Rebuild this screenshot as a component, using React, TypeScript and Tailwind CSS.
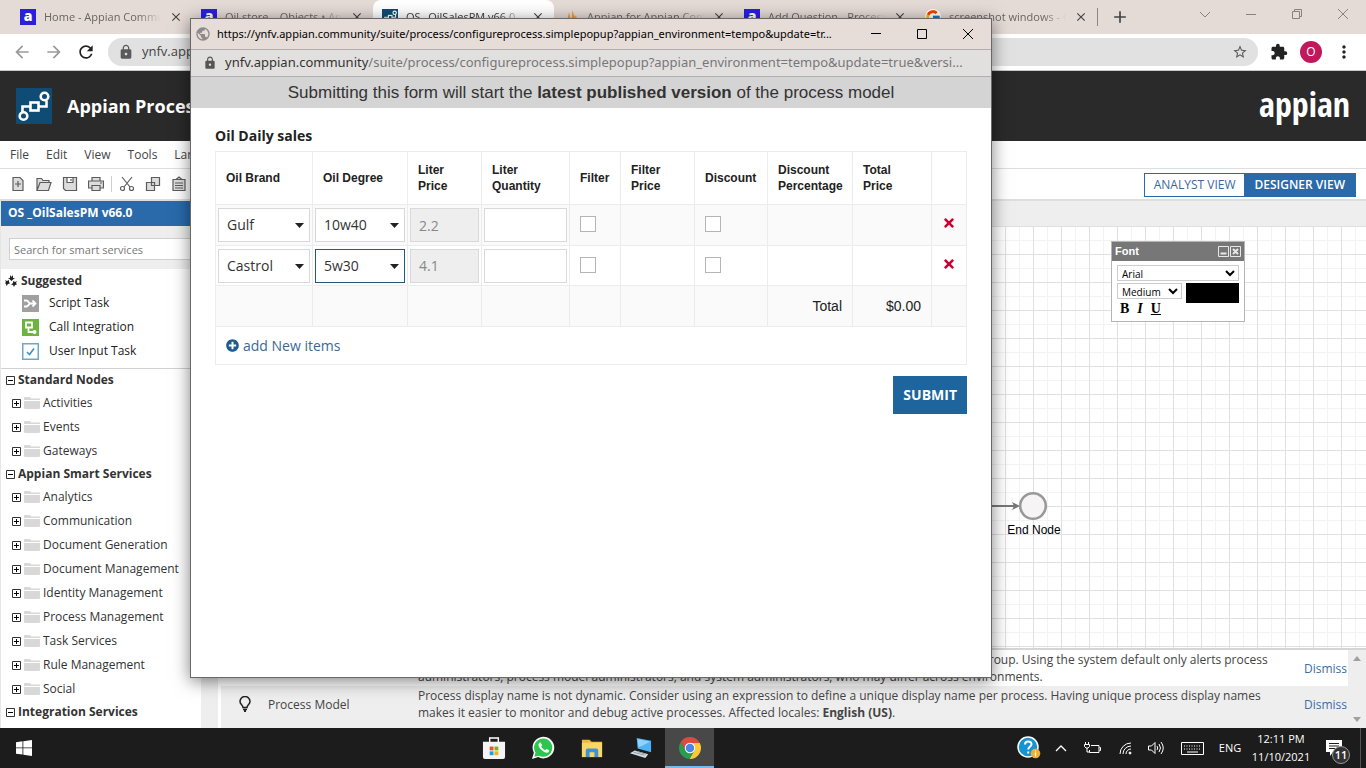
import type { ReactNode } from 'react';
import { MdArrowBack, MdArrowForward, MdClose, MdExtension, MdLock, MdMoreVert, MdPublic, MdRefresh, MdStarBorder, MdAdd } from 'react-icons/md';
import { FaPlusCircle, FaTimes } from 'react-icons/fa';
import { FcGoogle } from 'react-icons/fc';

const BROWSER_TABS = [
  { title: 'Home - Appian Community', icon: 'appian' },
  { title: 'Oil store – Objects • Appian', icon: 'appian' },
  { title: 'OS _OilSalesPM v66.0', icon: 'process', active: true },
  { title: 'Appian for Appian Community', icon: 'flame' },
  { title: 'Add Question - Process', icon: 'appian' },
  { title: 'screenshot windows - Google', icon: 'google' },
];

const NODE_GROUPS = [
  { name: 'Standard Nodes', items: ['Activities', 'Events', 'Gateways'] },
  {
    name: 'Appian Smart Services',
    items: [
      'Analytics',
      'Communication',
      'Document Generation',
      'Document Management',
      'Identity Management',
      'Process Management',
      'Task Services',
      'Rule Management',
      'Social',
    ],
  },
  { name: 'Integration Services', items: ['Connectors'] },
];

const SALES = [
  { brand: 'Gulf', degree: '10w40', price: '2.2' },
  { brand: 'Castrol', degree: '5w30', price: '4.1', focused: true },
];

const ProcessMark = ({ className }: { className: string }) => (
  <svg viewBox="0 0 36 36" className={className}>
    <rect width="36" height="36" fill="#0f4c75" />
    <g fill="none" stroke="#fff" strokeWidth="2.6">
      <circle cx="28.5" cy="8.5" r="3.8" />
      <circle cx="7.5" cy="28" r="3.8" />
      <rect x="14.500" y="14.500" width="8" height="8" />
      <path d="M6.500 24v-5.500h8M22.500 18.500h8v-6" />
    </g>
  </svg>
);

function Favicon({ icon }: { icon: string }) {
  if (icon === 'process') return <ProcessMark className="size-4 shrink-0" />;
  if (icon === 'google') return <FcGoogle className="size-4 shrink-0 rounded-full bg-white" />;
  if (icon === 'flame') {
    return (
      <svg viewBox="0 0 16 16" className="size-4 shrink-0">
        <path d="M1 15 3 9l1 3 2-9 2 8 1-2V1l3 7 1-2 2 9z" fill="#f0a04b" />
        <path d="M5 15 6 8l2 5 2-6 2 8z" fill="#e08020" />
      </svg>
    );
  }
  return (
    <span className="flex size-4 shrink-0 items-center justify-center bg-[#2a20dc] pb-0.5 text-sm leading-none font-extrabold text-white">
      a
    </span>
  );
}

function BrowserTabs() {
  return (
    <div className="flex h-[34px] shrink-0 bg-[#e4dad6] pl-[11px]">
      {BROWSER_TABS.map((tab) => (
        <div
          key={tab.title}
          className={`flex w-[181px] shrink-0 items-center gap-2 px-[9px] text-[11px] ${
            tab.active ? 'rounded-t-lg bg-white text-[#3c3c3c]' : 'text-[#6a6462]'
          }`}
        >
          <Favicon icon={tab.icon} />
          <span className="flex-1 overflow-hidden whitespace-nowrap [mask-image:linear-gradient(to_right,black_80%,transparent)]">
            {tab.title}
          </span>
          <button aria-label={`Close ${tab.title}`} className="text-[#444]">
            <MdClose className="size-3.5" />
          </button>
        </div>
      ))}
      <div className="my-2 w-px bg-[#8d8583]" />
      <button aria-label="New tab" className="px-3 text-[#444]">
        <MdAdd className="size-5" />
      </button>
      <div className="ml-auto flex text-[#8a817e]">
        {[
          { label: 'Search tabs', d: 'M1 4l5 5 5-5' },
          { label: 'Minimize', d: 'M1 6.500h10' },
          { label: 'Restore', d: 'M1.500 3.500h7v7h-7zM3.500 3.500v-2h7v7h-2' },
          { label: 'Close window', d: 'M1 1l10 10M11 1L1 11' },
        ].map((control) => (
          <button key={control.label} aria-label={control.label} className="flex w-[46px] items-start justify-center pt-2">
            <svg viewBox="0 0 12 12" className="size-3" fill="none" stroke="currentColor">
              <path d={control.d} />
            </svg>
          </button>
        ))}
      </div>
    </div>
  );
}

function AddressBar() {
  return (
    <div className="flex h-[37px] shrink-0 items-center border-b border-[#c9c9c9] bg-white px-3">
      <button aria-label="Back" className="w-8 text-[#9a9a9a]">
        <MdArrowBack className="size-5" />
      </button>
      <button aria-label="Forward" className="w-8 text-[#9a9a9a]">
        <MdArrowForward className="size-5" />
      </button>
      <button aria-label="Reload" className="w-8 text-[#222]">
        <MdRefresh className="size-5" />
      </button>
      <div className="flex h-7 flex-1 items-center gap-2 rounded-full bg-[#e1e1e1] px-2.5 text-[#5a5a5a]">
        <MdLock className="size-4" />
        <input
          aria-label="Address"
          defaultValue="ynfv.appian.community/suite/process/designer"
          className="flex-1 bg-transparent text-[13px] text-[#444] outline-none"
        />
        <MdStarBorder className="size-4" />
      </div>
      <button aria-label="Extensions" className="ml-3 text-[#222]">
        <MdExtension className="size-[18px]" />
      </button>
      <button className="ml-3 size-[22px] rounded-full bg-[#c2185b] text-xs text-white">O</button>
      <button aria-label="Menu" className="ml-3 text-[#222]">
        <MdMoreVert className="size-5" />
      </button>
    </div>
  );
}

const TOOL_ICONS: { label: string; art: ReactNode }[] = [
  { label: 'New', art: <path d="M3 1.500h7l3 3v10H3zM8 5v6M5 8h6" /> },
  { label: 'Open', art: <path d="M1 14.500v-12h4.500l1.500 2h6v2M1 14.500l3-8h11l-2.500 8z" /> },
  { label: 'Save', art: <path d="M1.500 1.500h13v13h-11l-2-2zM5 1.500v5h6v-5M9 3v2" /> },
  { label: 'Print', art: <path d="M4 5V1.500h8V5M4 12H.5V5h15v7H12M4 9.500h8v5H4zM12 7h2" /> },
  {
    label: 'Cut',
    art: (
      <g fill="none">
        <path d="M3 1l8 10M13 1L5 11" />
        <circle cx="3.500" cy="12.500" r="2" />
        <circle cx="12.500" cy="12.500" r="2" />
      </g>
    ),
  },
  { label: 'Copy', art: <path d="M6.500 1.500h8v8h-8zM1.500 6.500h8v8h-8z" /> },
  { label: 'Paste', art: <path d="M2 3.500h12v11H2zM5 3.500L8 1l3 2.500M4 7h8M4 9.500h8M4 12h8" /> },
];

function Toolbar() {
  return (
    <div className="flex h-8 shrink-0 items-center border-b-2 border-[#dedede] pr-2.5 pl-[5px]">
      {TOOL_ICONS.map((tool) => (
        <button
          key={tool.label}
          aria-label={tool.label}
          className={`flex w-[26px] justify-center ${tool.label === 'Cut' ? 'ml-0.5 box-content border-l border-[#d0d0d0] pl-0.5' : ''}`}
        >
          <svg viewBox="0 0 16 16" className="size-4" fill="#dcdcdc" stroke="#5c5c5c" strokeWidth="1.2">
            {tool.art}
          </svg>
        </button>
      ))}
      <div className="mt-0.5 ml-auto flex h-6 border border-[#2a6aab] text-xs">
        <button className="px-[9px] text-[#3a6a9c]">ANALYST VIEW</button>
        <button className="bg-[#2a6aab] px-2.5 font-semibold text-white">DESIGNER VIEW</button>
      </div>
    </div>
  );
}

const ToggleBox = ({ open }: { open: boolean }) => (
  <svg viewBox="0 0 9 9" className="size-[9px] shrink-0" fill="#fff" stroke="#333">
    <path d="M.5.500h8v8h-8z" />
    <path d={open ? 'M2 4.500h5' : 'M2 4.500h5M4.500 2v5'} stroke="#000" />
  </svg>
);

const Folder = () => (
  <svg viewBox="0 0 16 12" className="w-4 shrink-0">
    <path d="M0 1a1 1 0 0 1 1-1h5l1 1.500h9V3H0zM0 4h16v7a1 1 0 0 1-1 1H1a1 1 0 0 1-1-1z" fill="#d8d8d8" />
  </svg>
);

const SUGGESTED: { name: string; art: ReactNode }[] = [
  {
    name: 'Script Task',
    art: (
      <>
        <rect width="17" height="17" fill="#a0a0a0" />
        <path d="M2 5.500h2.500c2 0 2 3 4 3H13M2 11.500h2.500c2 0 2-3 4-3M10.500 5.500l3 3-3 3" fill="none" stroke="#fff" strokeWidth="1.8" />
      </>
    ),
  },
  {
    name: 'Call Integration',
    art: (
      <>
        <rect width="17" height="17" fill="#6cb33f" />
        <path d="M4 3.500h6v5H4zM6.500 8.500v4.500h5" fill="none" stroke="#fff" strokeWidth="1.800" />
        <circle cx="12.500" cy="13" r="2" fill="#fff" />
      </>
    ),
  },
  {
    name: 'User Input Task',
    art: (
      <>
        <rect x=".75" y=".75" width="15.500" height="15.500" fill="#fff" stroke="#6fa8c7" strokeWidth="1.500" />
        <path d="M5 9l2.500 2.500L12 5.500" fill="none" stroke="#3f8fc0" strokeWidth="1.600" />
      </>
    ),
  },
];

function Sidebar() {
  return (
    <aside className="w-[201px] shrink-0 overflow-hidden border-l border-[#e6e6e6] bg-white text-xs text-[#333]">
      <h2 className="h-[25px] bg-[#2a6aab] pl-[7px] leading-6 font-bold text-white">OS _OilSalesPM v66.0</h2>
      <div className="bg-[#eeeeee] px-2 pt-3 pb-[9px]">
        <input
          aria-label="Search for smart services"
          placeholder="Search for smart services"
          className="h-[22px] w-full border border-[#d0d0d0] bg-white px-1 text-[11px] placeholder:text-[#777]"
        />
      </div>
      <div className="border-b border-[#d0d0d0] pb-[5px]">
        <h3 className="flex h-[22px] items-center gap-1 pt-0.5 pl-1 font-bold">
          <svg viewBox="0 0 12 12" className="size-3" fill="#222">
            <path d="M5 0l1.500 2L8 0v3h2L8 4.500 6.500 6 5 4.500 3 3h2zM0 5l2 1 2-1v2l1 1.500-2 .5-1.500 2L1 9 0 8l1-1zM8 6l2 1 2-1-1 2 1 1.500-2 .5L9 12 8 10 6 9.500 8 8z" />
          </svg>
          Suggested
        </h3>
        {SUGGESTED.map((task) => (
          <a key={task.name} href="#" className="flex h-6 items-center gap-2.5 pl-[21px] text-[#222]">
            <svg viewBox="0 0 17 17" className="size-[17px]">
              {task.art}
            </svg>
            {task.name}
          </a>
        ))}
      </div>
      {NODE_GROUPS.map((group) => (
        <div key={group.name}>
          <h3 className="flex h-[22px] items-center gap-[3px] pl-[5px] font-bold">
            <ToggleBox open />
            {group.name}
          </h3>
          {group.items.map((item) => (
            <a key={item} href="#" className="flex h-6 items-center gap-[3px] pl-[11px]">
              <ToggleBox open={false} />
              <Folder />
              {item}
            </a>
          ))}
        </div>
      ))}
    </aside>
  );
}

function FontPanel() {
  return (
    <div className="absolute top-[15px] left-[890px] w-[134px] border border-[#b5b5b5] bg-white text-[10px]">
      <div className="flex h-[19px] items-center bg-[#777] px-[3px] text-[11px] font-bold text-white">
        Font
        <svg viewBox="0 0 23 11" className="ml-auto h-[11px] w-[23px]" fill="none" stroke="#e8e8e8">
          <path d="M.5.500h10v10H.5zM12.500.500h10v10h-10z" />
          <path d="M2.500 7.500h6M15 3l5 5M20 3l-5 5" strokeWidth="2" />
        </svg>
      </div>
      <div className="flex flex-wrap gap-x-1 gap-y-0.5 px-[5px] pt-1 pb-1 font-['Open_Sans',sans-serif]">
        <select aria-label="Font family" className="h-4 w-full border border-[#ccc] bg-white text-black">
          <option>Arial</option>
        </select>
        <select aria-label="Font size" className="h-4 w-[65px] border border-[#ccc] bg-white text-black">
          <option>Medium</option>
        </select>
        <button aria-label="Font colour" className="-mb-1 h-5 flex-1 bg-black" />
        <div className="flex w-full gap-2 pl-[3px] font-['Liberation_Serif',serif] text-sm leading-4 font-bold text-black">
          <button>B</button>
          <button className="italic">I</button>
          <button className="underline">U</button>
        </div>
      </div>
    </div>
  );
}

function Canvas() {
  return (
    <div className="relative flex-1 overflow-hidden bg-white font-['Liberation_Sans',sans-serif] text-xs [background-image:linear-gradient(#e0e0e0_1px,transparent_1px),linear-gradient(90deg,#e0e0e0_1px,transparent_1px),linear-gradient(#f3f3f3_1px,transparent_1px),linear-gradient(90deg,#f3f3f3_1px,transparent_1px)] [background-size:28px_28px,28px_28px,14px_14px,14px_14px]">
      <div className="absolute top-[265px] left-[726px] flex w-[174px] flex-col items-center text-black">
        <svg viewBox="0 0 174 30" className="h-[30px] w-[174px]">
          <path d="M0 15h70" stroke="#777" strokeWidth="1.800" />
          <path d="M65 11l8 4-8 4 2-4z" fill="#777" />
          <circle cx="86" cy="15" r="12.800" fill="#f6f4f5" stroke="#999" strokeWidth="2.600" />
        </svg>
        <span className="leading-[18px]">End Node</span>
      </div>
      <FontPanel />
    </div>
  );
}

function Recommendations() {
  return (
    <section className="flex h-20 shrink-0 border-t-2 border-[#d5d5d5] bg-[#eee] text-xs leading-[17px] text-[#444]">
      <div className="flex-1 overflow-hidden">
        {[
          <>
            Process model alerts are currently set to the default. Consider configuring custom alert settings for a group. Using
            the system default only alerts process administrators, process model administrators, and system administrators, who
            may differ across environments.
          </>,
          <>
            Process display name is not dynamic. Consider using an expression to define a unique display name per process. Having
            unique process display names makes it easier to monitor and debug active processes. Affected locales:{' '}
            <b>English (US)</b>.
          </>,
        ].map((message, i) => (
          <div key={i} className="flex h-9 items-center odd:bg-white even:bg-[#eee]">
            <svg viewBox="0 0 12 16" className="ml-[18px] h-4 w-3" fill="none" stroke="#222" strokeWidth="1.500">
              <path d="M4 11.500C4 9 1 8.500 1 5.500a5 5 0 0 1 10 0c0 3-3 3.500-3 6zM4 13.500h4" />
              <path d="M5 15h2" strokeWidth="2" />
            </svg>
            <span className="ml-[17px] w-[150px]">Process Model</span>
            <p className="w-[860px]">{message}</p>
            <a href="#" className="ml-auto pr-px text-[#3a6ea5]">
              Dismiss
            </a>
          </div>
        ))}
      </div>
      <div className="flex w-[18px] flex-col items-center justify-between py-1.5">
        <svg viewBox="0 0 8 5" className="w-2" fill="#a0a0a0">
          <path d="M0 5l4-5 4 5z" />
        </svg>
        <svg viewBox="0 0 8 5" className="w-2" fill="#a0a0a0">
          <path d="M0 0l4 5 4-5z" />
        </svg>
      </div>
    </section>
  );
}

function FormSelect({ label, value, focused }: { label: string; value: string; focused?: boolean }) {
  return (
    <div className="relative">
      <select
        aria-label={label}
        className={`h-[34px] w-full appearance-none border bg-white px-2 text-sm text-[#333] outline-none ${
          focused ? 'border-[#1f5c85]' : 'border-[#d9d9d9]'
        }`}
      >
        <option>{value}</option>
      </select>
      <svg viewBox="0 0 9 5" className="pointer-events-none absolute top-[15px] right-[6px] w-[9px]" fill="#222">
        <path d="M0 0h9L4.500 5z" />
      </svg>
    </div>
  );
}

const checkboxStyle = 'block size-4 appearance-none border border-[#b5b5b5] bg-white';

function SalesTable() {
  const cell = 'border border-[#ececec]';
  const head = `${cell} px-2.5 text-left text-xs leading-4 font-bold`;

  return (
    <table className="w-full table-fixed border-collapse bg-white">
      <colgroup>
        <col className="w-[97px]" />
        <col className="w-[95px]" />
        <col className="w-[74px]" />
        <col className="w-[88px]" />
        <col className="w-[51px]" />
        <col className="w-[74px]" />
        <col className="w-[73px]" />
        <col className="w-[85px]" />
        <col className="w-[79px]" />
        <col />
      </colgroup>
      <thead>
        <tr className="h-[53px] font-['Liberation_Sans',sans-serif] text-[#222]">
          <th className={head}>Oil Brand</th>
          <th className={head}>Oil Degree</th>
          <th className={head}>Liter Price</th>
          <th className={head}>Liter Quantity</th>
          <th className={head}>Filter</th>
          <th className={head}>Filter Price</th>
          <th className={head}>Discount</th>
          <th className={head}>Discount Percentage</th>
          <th className={`${head} pr-8`}>Total Price</th>
          <th className={head} />
        </tr>
      </thead>
      <tbody>
        {SALES.map((sale) => (
          <tr key={sale.brand} className="odd:h-[41px] odd:bg-[#fafafa] even:h-10">
            <td className={`${cell} px-0.5`}>
              <FormSelect label="Oil Brand" value={sale.brand} />
            </td>
            <td className={`${cell} px-0.5`}>
              <FormSelect label="Oil Degree" value={sale.degree} focused={sale.focused} />
            </td>
            <td className={`${cell} px-0.5`}>
              <input
                aria-label="Liter Price"
                disabled
                defaultValue={sale.price}
                className="block h-[34px] w-full border border-[#d9d9d9] bg-[#eeeeee] px-2 text-sm text-[#888]"
              />
            </td>
            <td className={`${cell} px-0.5`}>
              <input aria-label="Liter Quantity" className="block h-[34px] w-full border border-[#d9d9d9] bg-white px-2 text-sm" />
            </td>
            <td className={`${cell} px-2.5 pb-0.5`}>
              <input type="checkbox" aria-label="Filter" className={checkboxStyle} />
            </td>
            <td className={cell} />
            <td className={`${cell} px-2.5 pb-0.5`}>
              <input type="checkbox" aria-label="Discount" className={checkboxStyle} />
            </td>
            <td className={cell} />
            <td className={cell} />
            <td className={`${cell} pb-1`}>
              <button aria-label="Remove row" className="block w-full text-[#cc0033]">
                <FaTimes className="mx-auto size-3.5" />
              </button>
            </td>
          </tr>
        ))}
        <tr className="h-[41px] bg-[#fafafa] text-right font-['Liberation_Sans',sans-serif] text-sm text-[#222]">
          {[0, 1, 2, 3, 4, 5, 6].map((i) => (
            <td key={i} className={cell} />
          ))}
          <td className={`${cell} px-2.5`}>Total</td>
          <td className={`${cell} px-2.5`}>$0.00</td>
          <td className={cell} />
        </tr>
      </tbody>
      <tfoot>
        <tr className="h-[38px]">
          <td colSpan={10} className={`${cell} px-2.5`}>
            <a href="#" className="flex items-center gap-1 text-sm text-[#3a6a94]">
              <FaPlusCircle className="size-[13px] text-[#1d5c8c]" />
              add New items
            </a>
          </td>
        </tr>
      </tfoot>
    </table>
  );
}

function PopupWindow() {
  return (
    <div
      role="dialog"
      aria-label="Oil Daily sales"
      className="absolute top-[18px] left-[190px] flex h-[660px] w-[802px] flex-col border border-[#6b6766] bg-white shadow-[0_3px_16px_rgba(0,0,0,0.5)]"
    >
      <div className="flex h-[31px] shrink-0 items-center gap-1.5 border-b border-[#b3aeac] bg-[#e6dcd8] pl-1 text-black">
        <MdPublic className="size-4 shrink-0 text-[#8b8b8b]" />
        <span className="flex-1 font-['Noto_Sans',sans-serif] text-[11px] whitespace-nowrap">
          https://ynfv.appian.community/suite/process/configureprocess.simplepopup?appian_environment=tempo&amp;update=tr...
        </span>
        <div className="flex h-full">
          {[
            { label: 'Minimize popup', d: 'M1 5.500h10' },
            { label: 'Maximize popup', d: 'M1.500 1.500h9v9h-9z' },
            { label: 'Close popup', d: 'M1 1l10 10M11 1L1 11' },
          ].map((control) => (
            <button key={control.label} aria-label={control.label} className="flex w-[46px] items-center justify-center">
              <svg viewBox="0 0 12 12" className="size-3" fill="none" stroke="currentColor">
                <path d={control.d} />
              </svg>
            </button>
          ))}
        </div>
      </div>
      <div className="flex h-[27px] shrink-0 items-center gap-2 border-b border-[#b0b0b0] bg-[#e2e0df] pl-3 font-['Noto_Sans',sans-serif] text-[13px] whitespace-nowrap text-[#777]">
        <MdLock className="size-3.5 text-[#555]" />
        <span>
          <span className="text-[#333]">ynfv.appian.community</span>
          /suite/process/configureprocess.simplepopup?appian_environment=tempo&amp;update=true&amp;versi...
        </span>
      </div>
      <p className="h-[31px] shrink-0 bg-[#d4d4d4] text-center font-['Liberation_Sans',sans-serif] text-[17px] leading-[31px] text-[#333]">
        Submitting this form will start the <b>latest published version</b> of the process model
      </p>
      <form className="flex flex-col px-6 pt-[18px]" onSubmit={(e) => e.preventDefault()}>
        <h1 className="pb-[5px] text-sm leading-5 font-bold text-[#222]">Oil Daily sales</h1>
        <SalesTable />
        <button type="submit" className="mt-[11px] h-[38px] self-end bg-[#1d659c] px-2.5 text-sm font-bold text-white">
          SUBMIT
        </button>
      </form>
    </div>
  );
}

const TASKBAR_APPS: { label: string; active?: boolean; art: ReactNode }[] = [
  {
    label: 'Microsoft Store',
    art: (
      <>
        <path d="M8 7V2h9v5" fill="none" stroke="#fff" strokeWidth="1.500" />
        <path d="M1 6h23v16a2 2 0 0 1-2 2H3a2 2 0 0 1-2-2z" fill="#f4f4f4" />
        <path d="M8 11h4v4H8z" fill="#e0562f" />
        <path d="M13 11h4v4h-4z" fill="#7cb518" />
        <path d="M8 16h4v4H8z" fill="#1ba1e2" />
        <path d="M13 16h4v4h-4z" fill="#f2b01e" />
      </>
    ),
  },
  {
    label: 'WhatsApp',
    art: (
      <>
        <path d="M1 24l2-6.500A11.300 11.300 0 1 1 7.500 22z" fill="#fff" />
        <path d="M3.500 21.500l1.200-4.200A9.500 9.500 0 1 1 8.200 20.500z" fill="#2cc64e" />
        <path d="M9 7c-2 1-1.500 4 1.500 7s6.500 4.500 8 2.500c.6-1 .5-1.500 0-1.800l-2.300-1.200c-.6-.2-1 1.300-1.600 1.300-1.600-.4-3.600-2.600-4-3.800 0-.6 1-1 .8-1.600L10.300 7.200C10 6.800 9.500 6.800 9 7z" fill="#fff" />
      </>
    ),
  },
  {
    label: 'File Explorer',
    art: (
      <>
        <path d="M2 4h8l2 2h11v16H2z" fill="#f0b93a" />
        <path d="M2 7h21v15H2z" fill="#fbd66a" />
        <path d="M6 22v-7a2 2 0 0 1 2-2h9a2 2 0 0 1 2 2v7h-4v-5h-5v5z" fill="#3d94d1" />
      </>
    ),
  },
  {
    label: 'Remote Desktop',
    art: (
      <>
        <path d="M8 2l15 3v12L9 13z" fill="#4db3f5" />
        <path d="M9 3l13 3-12 6z" fill="#8fd2ff" />
        <path d="M6 15l14 4-3 4L1 18z" fill="#d5dde2" />
        <path d="M5 17l11 3M8 16l10 3" stroke="#8e9aa2" />
      </>
    ),
  },
  {
    label: 'Google Chrome',
    active: true,
    art: (
      <g transform="scale(.52)">
        <path d="M24 14H43.600A22 22 0 0 1 22.860 45.970L32.660 29z" fill="#fbc934" />
        <path d="M32.660 29L22.860 45.970A22 22 0 0 1 5.540 12.030L15.340 29z" fill="#2a9c50" />
        <path d="M15.340 29L5.540 12.030A22 22 0 0 1 43.600 14H24z" fill="#dd4b3e" />
        <circle cx="24" cy="24" r="10.500" fill="#fff" />
        <circle cx="24" cy="24" r="8.500" fill="#4a86e8" />
      </g>
    ),
  },
];

function Taskbar() {
  return (
    <footer className="flex h-10 shrink-0 items-stretch bg-[#1c1c1c] text-xs text-white">
      <button aria-label="Start" className="flex w-12 items-center justify-center">
        <svg viewBox="0 0 16 16" className="size-4" fill="#fff">
          <path d="M0 2.200L6.500 1.300v6.200H0zM7.300 1.200L16 0v7.500H7.300zM0 8.300h6.500v6.200L0 13.700zM7.300 8.300H16V16l-8.700-1.200z" />
        </svg>
      </button>
      <div className="w-[421px] shrink" />
      {TASKBAR_APPS.map((app) => (
        <button
          key={app.label}
          aria-label={app.label}
          className={`flex w-[49px] items-center justify-center border-b-2 pt-0.5 ${
            app.active ? 'border-[#76b9ed] bg-[#484848]' : 'border-transparent'
          }`}
        >
          <svg viewBox="0 0 25 25" className="size-6">
            {app.art}
          </svg>
        </button>
      ))}
      <div className="ml-auto flex items-center">
        <button aria-label="Help" className="flex w-9 justify-center">
          <svg viewBox="0 0 24 24" className="size-6">
            <circle cx="11" cy="11" r="10" fill="#1594d4" stroke="#fff" strokeWidth="1.500" />
            <path d="M8 8.500c0-4 6.500-4 6.500-.3 0 2.600-3.300 2.600-3.300 5.300M11.200 15.500v2" fill="none" stroke="#fff" strokeWidth="2" />
            <circle cx="18.500" cy="17.500" r="4.800" fill="#f2ae2e" />
            <path d="M18.500 14.500v1M18.500 16.500v4" stroke="#fff" strokeWidth="1.300" />
          </svg>
        </button>
        <button aria-label="Hidden icons" className="flex w-[27px] justify-center">
          <svg viewBox="0 0 12 7" className="w-3" fill="none" stroke="#fff" strokeWidth="1.300">
            <path d="M1 6l5-5 5 5" />
          </svg>
        </button>
        <button aria-label="Battery" className="flex w-9 justify-center">
          <svg viewBox="0 0 17 12" className="w-[17px]" fill="none" stroke="#fff">
            <path d="M7 3.500h8v7H5.500V8M15.500 5.500h1v3h-1M1.500 0v2M4.500 0v2M.5 2.500h5v2l-1.500 1.500H2L.5 4.500zM3 6v4h2.500" />
          </svg>
        </button>
        <button aria-label="Network" className="flex w-[31px] justify-center">
          <svg viewBox="0 0 13 13" className="w-[13px]" fill="none" stroke="#fff">
            <path d="M1 12A11 11 0 0 1 12 1M4 12a8 8 0 0 1 8-8M7 12a5 5 0 0 1 5-5" />
            <circle cx="11" cy="11" r="1" fill="#fff" />
          </svg>
        </button>
        <button aria-label="Volume" className="flex w-[31px] justify-center">
          <svg viewBox="0 0 17 14" className="w-[17px]" fill="none" stroke="#fff">
            <path d="M.5 5h3L7 1.500v11L3.500 9h-3zM9 5q1.500 2 0 4M11 3q3 4 0 8M13 1q4.500 6 0 12" />
          </svg>
        </button>
        <button aria-label="Touch keyboard" className="flex w-10 justify-center">
          <svg viewBox="0 0 23 13" className="w-[23px]" fill="none" stroke="#fff">
            <path d="M.5.500h22v12H.5z" />
            <path d="M3 4h17M3 7h17" strokeDasharray="1 1.500" />
            <path d="M6 10h11" />
          </svg>
        </button>
        <span className="w-9 text-center text-[11px]">ENG</span>
        <time className="w-[66px] text-center text-[11px] leading-[18px]">
          12:11 PM
          <br />
          11/10/2021
        </time>
        <button aria-label="Notifications" className="relative flex h-10 w-[46px] items-center justify-center">
          <svg viewBox="0 0 16 16" className="-ml-1.5 size-4" fill="#fff">
            <path d="M0 0h16v12H7l-3 4v-4H0z" />
            <path d="M3 3.500h10M3 6h10M3 8.500h6" stroke="#1c1c1c" />
          </svg>
          <span className="absolute right-[10px] bottom-1 flex size-[18px] items-center justify-center rounded-full border border-[#999] bg-[#333] text-[11px] font-semibold">
            11
          </span>
        </button>
        <div className="mr-[5px] h-full w-px bg-[#555]" />
      </div>
    </footer>
  );
}

export default function App() {
  return (
    <div className="relative flex h-screen flex-col overflow-hidden bg-white font-['Open_Sans','Noto_Sans',sans-serif]">
      <BrowserTabs />
      <AddressBar />
      <header className="flex h-[70px] shrink-0 items-center gap-[15px] bg-[#2a2a2a] px-4 text-white">
        <ProcessMark className="size-9" />
        <span className="text-lg font-bold">Appian Process Modeler</span>
        <span className="ml-auto pb-1 font-['Liberation_Sans_Narrow','Open_Sans_Condensed','DejaVu_Sans_Condensed',sans-serif] text-[34px] leading-none font-bold">
          appian
        </span>
      </header>
      <nav className="flex h-7 shrink-0 items-center gap-[17px] border-b border-[#dedede] pl-2.5 text-xs text-[#444]">
        {['File', 'Edit', 'View', 'Tools', 'Language'].map((item) => (
          <button key={item}>{item}</button>
        ))}
      </nav>
      <Toolbar />
      <main className="flex min-h-0 flex-1">
        <Sidebar />
        <div className="flex min-w-0 flex-1 flex-col bg-[#eee]">
          <div className="h-[25px] shrink-0" />
          <div className="ml-[17px] flex min-h-0 flex-1 flex-col border-l-[3px] border-white">
            <Canvas />
            <Recommendations />
          </div>
        </div>
      </main>
      <PopupWindow />
      <Taskbar />
    </div>
  );
}
